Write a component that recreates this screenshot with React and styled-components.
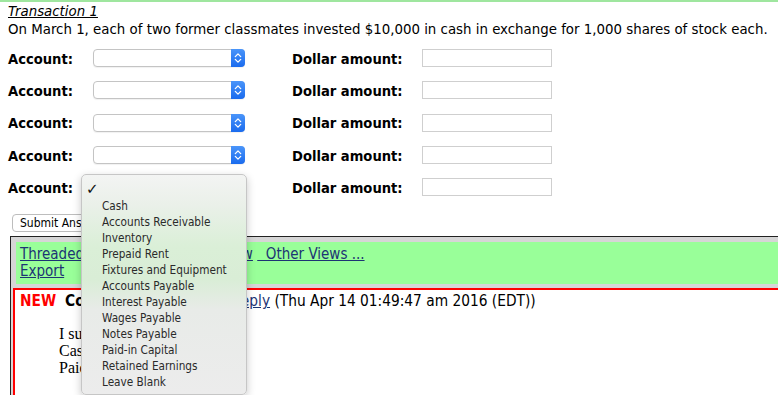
import React from 'react'
import styled, { createGlobalStyle } from 'styled-components'

const GlobalStyle = createGlobalStyle`
  html, body {
    margin: 0;
    padding: 0;
    background: #fff;
  }
  body {
    font-family: "DejaVu Sans Condensed", "DejaVu Sans", sans-serif;
    color: #000;
    overflow: hidden;
  }
`

const accounts = [
    'Cash',
    'Accounts Receivable',
    'Inventory',
    'Prepaid Rent',
    'Fixtures and Equipment',
    'Accounts Payable',
    'Interest Payable',
    'Wages Payable',
    'Notes Payable',
    'Paid-in Capital',
    'Retained Earnings',
    'Leave Blank',
]

function Chevrons() {
    return (
        <svg width="14" height="18" viewBox="0 0 14 18">
            <path d="M4.3 7.6 L7 4.9 L9.7 7.6" fill="none" stroke="#fff" strokeWidth="1.3" strokeLinecap="round" strokeLinejoin="round" />
            <path d="M4.3 10.4 L7 13.1 L9.7 10.4" fill="none" stroke="#fff" strokeWidth="1.3" strokeLinecap="round" strokeLinejoin="round" />
        </svg>
    )
}

function AccountSelect({ open }) {
    return (
        <SelectBox>
            <SelectArrow><Chevrons /></SelectArrow>
            {open && (
                <Menu>
                    <MenuItem $first>
                        <Check>✓</Check>
                    </MenuItem>
                    {accounts.map(a => (
                        <MenuItem key={a}>
                            <Check />
                            {a}
                        </MenuItem>
                    ))}
                </Menu>
            )}
        </SelectBox>
    )
}

function App() {
    return (
        <Page>
            <GlobalStyle />
            <TopRule />
            <Content>
                <Title>Transaction 1</Title>
                <Prompt>On March 1, each of two former classmates invested $10,000 in cash in exchange for 1,000 shares of stock each.</Prompt>
                <Entries>
                    {[0, 1, 2, 3, 4].map(i => (
                        <Row key={i}>
                            <Label $w={85}>Account:</Label>
                            <AccountSelect open={i === 4} />
                            <Label $w={130} $ml={47}>Dollar amount:</Label>
                            <AmountInput />
                        </Row>
                    ))}
                </Entries>
                <SubmitButton>Submit Answer</SubmitButton>
            </Content>
            <Board>
                <Nav>
                    <NavLink>Threaded View</NavLink>{' '}
                    <NavLink>Chronological View</NavLink>{' '}
                    <NavLink>{'  Other Views ...'}</NavLink>
                    <br />
                    <NavLink>Export</NavLink>
                </Nav>
                <Post>
                    <PostHead>
                        <New>NEW</New><Author>Comment by student</Author> <NavLink>Reply</NavLink> (Thu Apr 14 01:49:47 am 2016 (EDT))
                    </PostHead>
                    <PostBody>
                        I suppose:<br />
                        Cash 20,000<br />
                        Paid-in Capital 20,000
                    </PostBody>
                </Post>
            </Board>
        </Page>
    )
}

const Page = styled.div`
    position: relative;
    width: 778px;
    height: 395px;
    overflow: hidden;
`

const TopRule = styled.div`
    height: 2px;
    background: #9fe69f;
`

const Content = styled.div`
    padding-left: 8px;
`

const Title = styled.div`
    padding-top: 1px;
    font-size: 14.85px;
    line-height: 17px;
    font-style: italic;
    text-decoration: underline;
`

const Prompt = styled.div`
    margin-top: 1px;
    font-size: 14.85px;
    line-height: 17px;
    white-space: nowrap;
`

const Entries = styled.div`
    margin-top: 4px;
    display: flex;
    flex-direction: column;
`

const Row = styled.div`
    display: flex;
    align-items: center;
    height: 32.3px;
`

const Label = styled.div`
    width: ${p => p.$w}px;
    margin-left: ${p => p.$ml || 0}px;
    font-size: 14.6px;
    font-weight: bold;
    white-space: nowrap;
`

const SelectBox = styled.div`
    position: relative;
    display: flex;
    justify-content: flex-end;
    width: 152px;
    height: 18px;
    box-sizing: border-box;
    border: 1px solid #c4c4c4;
    border-radius: 4px;
    background: #fff;
    box-shadow: 0 1px 1px rgba(0, 0, 0, 0.06);
`

const SelectArrow = styled.div`
    width: 14px;
    height: 18px;
    margin: -1px -1px -1px 0;
    border-radius: 0 4px 4px 0;
    background: linear-gradient(#4a95fa, #1a6bee);
`

const AmountInput = styled.div`
    width: 130px;
    height: 18px;
    box-sizing: border-box;
    border: 1px solid #cfcfcf;
    background: #fff;
`

const Menu = styled.div`
    position: absolute;
    left: -13px;
    top: -5px;
    z-index: 10;
    width: 166px;
    box-sizing: border-box;
    padding: 5px 0 4px;
    border: 1px solid #c6c6c6;
    border-radius: 5px;
    background: linear-gradient(
        #f3f4f3 0px,
        #eaf0e9 30px,
        #daefd7 72px,
        #d9edd6 104px,
        #e8ebe8 135px,
        #ececec 100%
    );
    box-shadow: 0 3px 9px rgba(0, 0, 0, 0.22);
`

const MenuItem = styled.div`
    display: flex;
    align-items: center;
    height: ${p => (p.$first ? 18 : 16)}px;
    font-family: "DejaVu Sans Condensed", "DejaVu Sans", sans-serif;
    font-size: 11.7px;
    color: #2a2a2a;
    white-space: nowrap;
`

const Check = styled.span`
    width: 16px;
    padding-left: 4px;
    font-family: "DejaVu Sans", sans-serif;
    font-size: 15px;
    line-height: 16px;
    color: #111;
`

const SubmitButton = styled.div`
    display: inline-flex;
    align-items: center;
    height: 18px;
    margin: 11px 0 0 4px;
    padding: 0 7px;
    box-sizing: border-box;
    border: 1px solid #bdbdbd;
    border-radius: 4px;
    background: #fff;
    font-size: 12px;
`

const Board = styled.div`
    margin: 4px -20px 0 10px;
    padding: 5px 0 0 2px;
    border-top: 1px solid #222;
    border-left: 1px solid #222;
    background: #d6d6d6;
`

const Nav = styled.div`
    margin-left: 3px;
    padding: 4px 4px 8px;
    height: 42px;
    box-sizing: border-box;
    background: #99ff99;
    font-size: 15px;
    line-height: 17px;
`

const NavLink = styled.span`
    color: #1d3474;
    text-decoration: underline;
    white-space: pre;
`

const Post = styled.div`
    margin-top: 4px;
    height: 120px;
    border: 2px solid #ff0000;
    background: #fff;
    padding: 3px 5px 0;
`

const PostHead = styled.div`
    font-size: 15.3px;
    line-height: 17px;
    white-space: nowrap;
`

const New = styled.span`
    color: #ff0000;
    font-weight: bold;
`

const Author = styled.span`
    margin-left: 9px;
    font-weight: bold;
`

const PostBody = styled.div`
    margin: 15px 0 0 39px;
    font-family: "Liberation Serif", serif;
    font-size: 16px;
    line-height: 17px;
`

export default App
